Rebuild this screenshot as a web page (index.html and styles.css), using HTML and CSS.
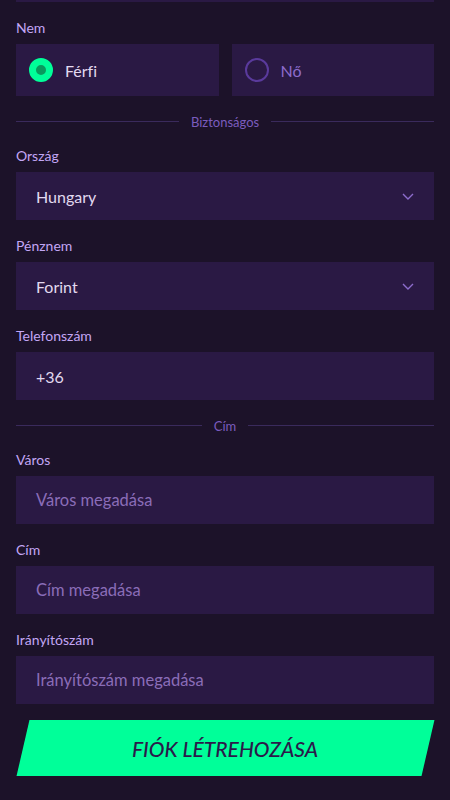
FILE: index.html
```html
<!DOCTYPE html>
<html lang="hu">
<head>
    <meta charset="UTF-8">
    <meta name="viewport" content="width=device-width, initial-scale=1.0">
    <title>Regisztráció</title>
    <link rel="stylesheet" href="styles.css">
</head>
<body>

<form class="form">
    <div class="input input-cut"></div>

    <div class="field">
        <label class="label">Nem</label>
        <div class="radios">
            <label class="radio checked">
                <span class="dot"></span>
                <span>Férfi</span>
            </label>
            <label class="radio">
                <span class="dot"></span>
                <span>Nő</span>
            </label>
        </div>
    </div>

    <div class="divider"><span>Biztonságos</span></div>

    <div class="field">
        <label class="label">Ország</label>
        <div class="input select">
            <span>Hungary</span>
            <svg class="chevron" width="12" height="7" viewBox="0 0 12 7"><path d="M1 1l5 5 5-5" fill="none" stroke="currentColor" stroke-width="1.4"/></svg>
        </div>
    </div>

    <div class="field">
        <label class="label">Pénznem</label>
        <div class="input select">
            <span>Forint</span>
            <svg class="chevron" width="12" height="7" viewBox="0 0 12 7"><path d="M1 1l5 5 5-5" fill="none" stroke="currentColor" stroke-width="1.4"/></svg>
        </div>
    </div>

    <div class="field">
        <label class="label">Telefonszám</label>
        <div class="input"><span>+36</span></div>
    </div>

    <div class="divider"><span>Cím</span></div>

    <div class="field">
        <label class="label">Város</label>
        <div class="input placeholder">Város megadása</div>
    </div>

    <div class="field">
        <label class="label">Cím</label>
        <div class="input placeholder">Cím megadása</div>
    </div>

    <div class="field">
        <label class="label">Irányítószám</label>
        <div class="input placeholder">Irányítószám megadása</div>
    </div>

    <button type="button" class="submit"><span>Fiók létrehozása</span></button>
</form>

</body>
</html>
```

FILE: styles.css
```css
body {
    margin: 0;
    background-color: #1c1229;
    font-family: Lato, "Noto Sans", sans-serif;
    font-variant-ligatures: none;
    color: #e2d9f0;
}
.form {
    display: flex;
    flex-direction: column;
    gap: 17px;
    padding: 0 16px;
}
.input-cut {
    margin-top: -46px;
}
.field {
    display: flex;
    flex-direction: column;
}
.label {
    font-size: 14px;
    line-height: 17px;
    margin-bottom: 8px;
    color: #c3a6f5;
}
.input {
    height: 48px;
    box-sizing: border-box;
    padding: 0 20px;
    display: flex;
    align-items: center;
    background-color: #2a1944;
    font-size: 16px;
}
.select {
    justify-content: space-between;
}
.chevron {
    color: #8d6ccc;
}
.placeholder {
    font-size: 16.5px;
    color: #8a6db8;
}
.radios {
    display: grid;
    grid-template-columns: 1fr 1fr;
    gap: 13px;
}
.radio {
    height: 52px;
    display: flex;
    align-items: center;
    gap: 12px;
    padding: 0 13px;
    background-color: #2a1944;
    font-size: 16px;
    color: #8d6ccc;
}
.radio .dot {
    width: 24px;
    height: 24px;
    box-sizing: border-box;
    border-radius: 50%;
    border: 2px solid #5a3a9c;
}
.radio.checked {
    color: #e2d9f0;
}
.radio.checked .dot {
    border: 7px solid #00ff99;
    background-color: #0a9a5e;
}
.divider {
    display: flex;
    align-items: center;
    gap: 12px;
    height: 17px;
    font-size: 13px;
    color: #7b5cbe;
}
.divider::before,
.divider::after {
    content: "";
    flex: 1;
    height: 1px;
    background-color: #3a2a5c;
}
.submit {
    height: 56px;
    margin-top: -1px;
    margin-bottom: 24px;
    border: none;
    background: none;
    padding: 0;
    position: relative;
    cursor: pointer;
}
.submit::before {
    content: "";
    position: absolute;
    top: 0;
    bottom: 0;
    left: 6.5px;
    right: 6.5px;
    background-color: #00ff99;
    transform: skewX(-13deg);
}
.submit span {
    position: relative;
    font-family: Lato, sans-serif;
    font-size: 21px;
    font-weight: 500;
    font-style: italic;
    text-transform: uppercase;
    color: #2b1a4a;
}
```
